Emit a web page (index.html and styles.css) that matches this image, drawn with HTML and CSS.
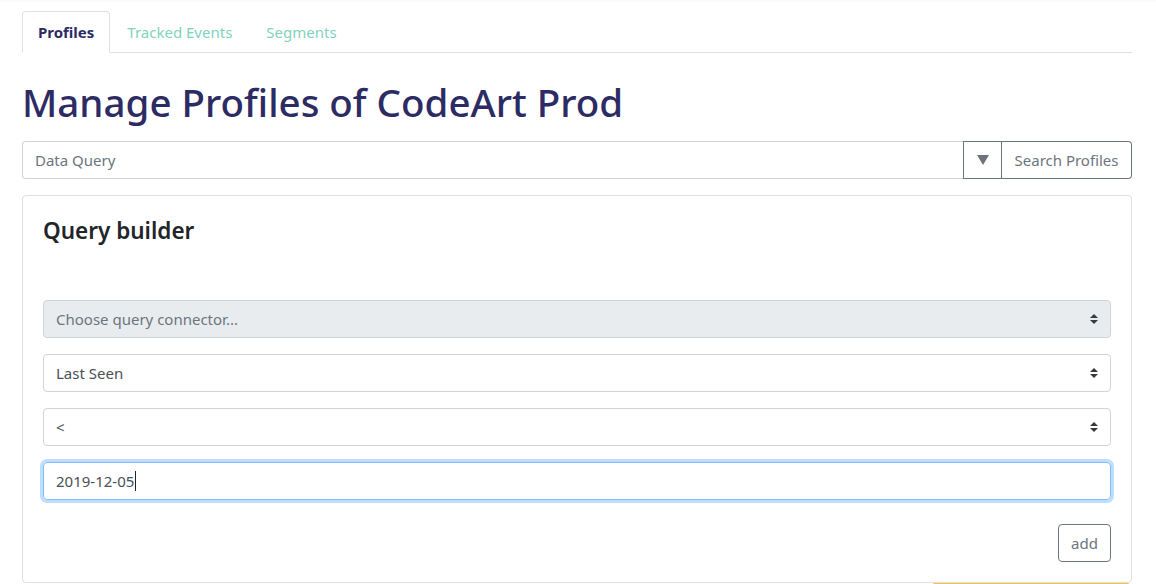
FILE: index.html
```html
<!DOCTYPE html>
<html>
<head>
<meta charset="utf-8">
<link rel="stylesheet" href="styles.css">
</head>
<body>
<div class="topbar"></div>
<div class="container">
  <ul class="tabs">
    <li class="tab active">Profiles</li>
    <li class="tab">Tracked Events</li>
    <li class="tab">Segments</li>
  </ul>
  <h1 class="title">Manage Profiles of CodeArt Prod</h1>
  <div class="search-group">
    <div class="search-input">Data Query</div>
    <button class="btn btn-toggle"><svg width="12" height="10" viewBox="0 0 12 10"><path d="M0 0H12L6 10Z" fill="#6c757d"/></svg></button>
    <button class="btn btn-search">Search Profiles</button>
  </div>
  <div class="card">
    <h4 class="card-title">Query builder</h4>
    <div class="fields">
      <div class="field select disabled">Choose query connector...<span class="caret"></span></div>
      <div class="field select">Last Seen<span class="caret"></span></div>
      <div class="field select">&lt;<span class="caret"></span></div>
      <div class="field focus">2019-12-05<span class="cursor"></span></div>
    </div>
    <div class="actions"><button class="btn btn-add">add</button></div>
  </div>
  <div class="below"><div class="peek"></div></div>
</div>
</body>
</html>
```
FILE: styles.css
```css
* { box-sizing: border-box; }
html, body { margin: 0; padding: 0; background: #fff; }
body {
  font-family: "Segoe UI", "Noto Sans", "Open Sans", sans-serif;
  font-size: 15px;
  color: #212529;
  overflow: hidden;
  height: 584px;
}
.topbar { height: 2px; background: #fbfbfb; }
.container { width: 1110px; margin: 0 0 0 22px; }
.tabs {
  list-style: none;
  margin: 9px 0 0 0;
  padding: 0;
  display: flex;
  border-bottom: 1px solid #dee2e6;
  height: 42px;
}
.tab {
  padding: 0 16px;
  height: 42px;
  line-height: 40px;
  color: #7fd3bd;
  font-size: 15px;
  border: 1px solid transparent;
  border-radius: 4px 4px 0 0;
  margin-bottom: -1px;
}
.tab.active {
  color: #2d2b63;
  font-weight: 700;
  border-color: #dee2e6 #dee2e6 #fff;
  background: #fff;
  padding: 0 15px;
}
.title {
  margin: 24px 0 0 0;
  font-size: 38.5px;
  font-weight: 500;
  line-height: 50px;
  color: #2d2b63;
  height: 64px;
}
.search-group { display: flex; height: 38px; margin-top: 0; }
.search-input {
  flex: 1;
  border: 1px solid #ced4da;
  border-right: none;
  border-radius: 4px 0 0 4px;
  padding: 0 12px;
  line-height: 36px;
  color: #6c757d;
  font-size: 15px;
}
.btn {
  font-family: inherit;
  background: #fff;
  border: 1px solid #6c757d;
  color: #6c757d;
  font-size: 15px;
  padding: 0 12px;
  margin: 0;
}
.btn-toggle { width: 39px; border-radius: 0; display: flex; align-items: center; justify-content: center; padding: 0; }
.btn-search { width: 130px; border-left: none; border-radius: 0 4px 4px 0; padding: 0; }
.card {
  margin-top: 16px;
  border: 1px solid #dfdfdf;
  border-radius: 4px;
  padding: 20px;
  height: 388px;
}
.card-title {
  margin: 0;
  font-size: 22.5px;
  font-weight: 600;
  line-height: 30px;
  color: #212529;
}
.fields { margin-top: 54px; display: flex; flex-direction: column; gap: 16px; }
.field {
  position: relative;
  height: 38px;
  border: 1px solid #ced4da;
  border-radius: 4px;
  padding: 0 12px;
  line-height: 36px;
  color: #495057;
  font-size: 15px;
}
.field.disabled { background: #e9ecef; color: #6c757d; }
.field.focus {
  border-color: #80bdff;
  box-shadow: 0 0 0 3px rgba(0, 123, 255, 0.25);
  color: #495057;
}
.caret {
  position: absolute;
  right: 12px;
  top: 13px;
  width: 8px;
  height: 10px;
}
.caret::before, .caret::after {
  content: "";
  position: absolute;
  left: 0;
  border-left: 4px solid transparent;
  border-right: 4px solid transparent;
}
.caret::before { top: 0; border-bottom: 4px solid #343a40; }
.caret::after { bottom: 0; border-top: 4px solid #343a40; }
.cursor {
  display: inline-block;
  width: 1px;
  height: 20px;
  background: #212529;
  vertical-align: middle;
  margin-left: 1px;
  margin-top: -3px;
}
.actions { display: flex; justify-content: flex-end; margin-top: 24px; }
.btn-add { height: 38px; width: 53px; border-radius: 4px; padding: 0; }
.below { display: flex; justify-content: flex-end; }
.peek { width: 198px; height: 3px; background: #f5c242; margin-right: 2px; margin-top: 0; border-radius: 3px 3px 0 0; }
```
